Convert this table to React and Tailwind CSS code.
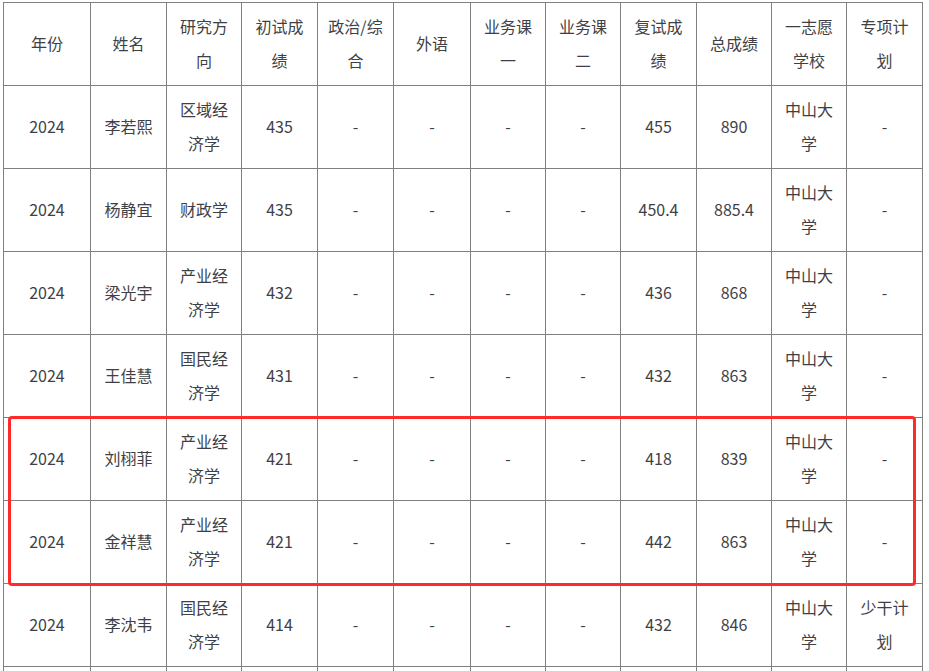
const headers = [
  '年份',
  '姓名',
  '研究方向',
  '初试成绩',
  '政治/综合',
  '外语',
  '业务课一',
  '业务课二',
  '复试成绩',
  '总成绩',
  '一志愿学校',
  '专项计划',
];

const widths = [87, 76, 75, 76, 76, 77, 75, 75, 76, 75, 75, 76];

const rows = [
  ['2024', '李若熙', '区域经济学', '435', '-', '-', '-', '-', '455', '890', '中山大学', '-'],
  ['2024', '杨静宜', '财政学', '435', '-', '-', '-', '-', '450.4', '885.4', '中山大学', '-'],
  ['2024', '梁光宇', '产业经济学', '432', '-', '-', '-', '-', '436', '868', '中山大学', '-'],
  ['2024', '王佳慧', '国民经济学', '431', '-', '-', '-', '-', '432', '863', '中山大学', '-'],
  ['2024', '刘栩菲', '产业经济学', '421', '-', '-', '-', '-', '418', '839', '中山大学', '-'],
  ['2024', '金祥慧', '产业经济学', '421', '-', '-', '-', '-', '442', '863', '中山大学', '-'],
  ['2024', '李沈韦', '国民经济学', '414', '-', '-', '-', '-', '432', '846', '中山大学', '少干计划'],
  ['', '', '', '', '', '', '', '', '', '', '', ''],
];

export default function App() {
  return (
    <div
      className="relative h-[671px] w-[929px] overflow-hidden bg-white pl-[3px] pt-[2px] text-[#3f3f46]"
      style={{ fontFamily: '"Noto Sans CJK SC", "Microsoft YaHei", sans-serif' }}
    >
      <table className="table-fixed border-collapse text-[16px] leading-[34px]">
        <colgroup>
          {widths.map((w, i) => (
            <col key={i} style={{ width: w }} />
          ))}
        </colgroup>
        <thead>
          <tr className="h-[83px]">
            {headers.map((h) => (
              <th key={h} className="border border-[#808080] px-[10px] pb-[2px] text-center align-middle font-normal break-all">
                {h}
              </th>
            ))}
          </tr>
        </thead>
        <tbody>
          {rows.map((r, ri) => (
            <tr key={ri} className="h-[83px]">
              {r.map((c, ci) => (
                <td key={ci} className="border border-[#808080] px-[10px] pb-[2px] text-center align-middle break-all">
                  {c}
                </td>
              ))}
            </tr>
          ))}
        </tbody>
      </table>

      {/* highlight box */}
      <div className="pointer-events-none absolute left-[8px] top-[416px] h-[170px] w-[908px] rounded-[4px] border-[3px] border-[#ff2a2a]" />
    </div>
  );
}
